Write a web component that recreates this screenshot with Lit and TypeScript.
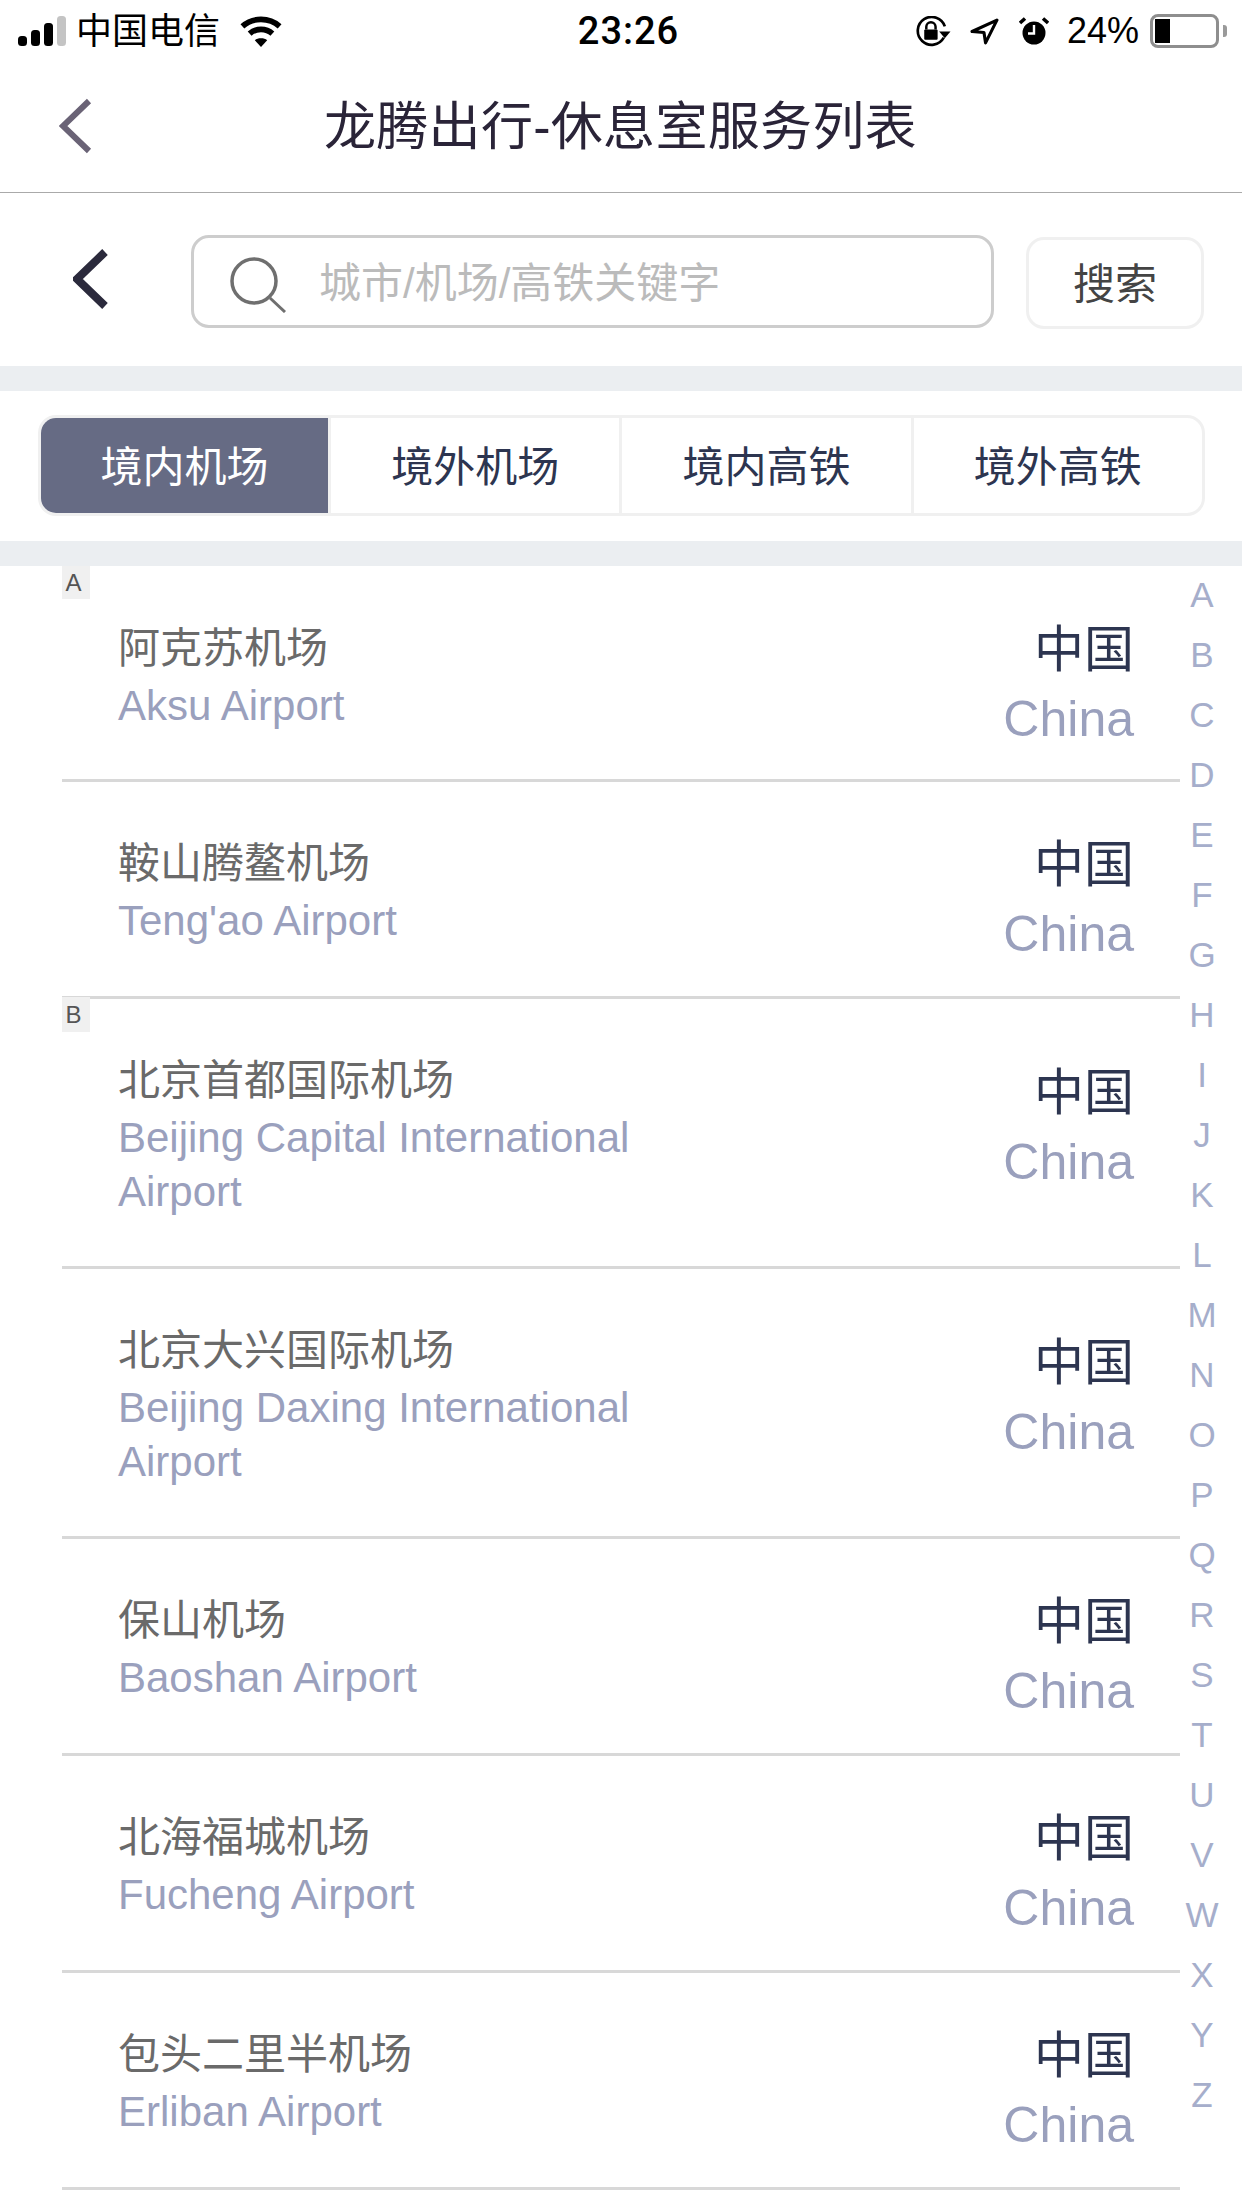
import { LitElement, html, css, svg } from 'lit';
import { customElement } from 'lit/decorators.js';

interface Airport {
  name: string;
  en: string;
  letter?: string;
  two?: boolean;
}

const AIRPORTS: Airport[] = [
  { name: '阿克苏机场', en: 'Aksu Airport', letter: 'A' },
  { name: '鞍山腾鳌机场', en: "Teng'ao Airport" },
  { name: '北京首都国际机场', en: 'Beijing Capital International Airport', letter: 'B', two: true },
  { name: '北京大兴国际机场', en: 'Beijing Daxing International Airport', two: true },
  { name: '保山机场', en: 'Baoshan Airport' },
  { name: '北海福城机场', en: 'Fucheng Airport' },
  { name: '包头二里半机场', en: 'Erliban Airport' }
];

const LETTERS = 'ABCDEFGHIJKLMNOPQRSTUVWXYZ'.split('');
const TABS = ['境内机场', '境外机场', '境内高铁', '境外高铁'];

const chevron = (w: number, h: number, cls: string) => svg`
  <svg class=${cls} width=${w} height=${h} viewBox="0 0 ${w} ${h}" fill="none">
    <path d="M${w - 4} 4 L4 ${h / 2} L${w - 4} ${h - 4}" stroke="currentColor"/>
  </svg>`;

@customElement('app-root')
export class AppRoot extends LitElement {
  static styles = css`
    :host {
      display: block;
      position: relative;
      width: 1242px;
      height: 2208px;
      overflow: hidden;
      background: #fff;
      font-family: "Liberation Sans", "Noto Sans CJK SC", sans-serif;
    }
    svg {
      display: block;
    }
    .status {
      height: 62px;
      display: grid;
      grid-template-columns: 1fr auto 1fr;
      align-items: center;
      padding: 0 15px 0 18px;
      color: #000;
      font-size: 36px;
    }
    .status-left, .status-right {
      display: flex;
      align-items: center;
    }
    .status-right {
      justify-content: flex-end;
    }
    .carrier {
      margin: 2px 19px 0 10px;
      line-height: 40px;
    }
    .time {
      font-family: Roboto, sans-serif;
      font-weight: 500;
      font-size: 38px;
      letter-spacing: 1px;
      margin-left: 12px;
    }
    .pct {
      margin: 0 11px 0 18px;
    }
    .ic-loc {
      margin: 0 20px 0 19px;
    }
    .battery {
      display: flex;
      align-items: center;
      gap: 4px;
    }
    .cell {
      width: 69px;
      height: 34px;
      box-sizing: border-box;
      border: 3px solid #8e8e8e;
      border-radius: 8px;
      padding: 2px;
    }
    .cell div {
      width: 15px;
      height: 100%;
      background: #000;
    }
    .nub {
      width: 4px;
      height: 12px;
      background: #9a9a9a;
      border-radius: 0 3px 3px 0;
    }
    .nav {
      height: 130px;
      display: flex;
      align-items: center;
      border-bottom: 1px solid #aaa;
    }
    .nav-back {
      margin-left: 59px;
      margin-top: -2px;
      color: #6a6376;
      stroke-width: 6px;
    }
    .title {
      margin-left: 231px;
      font-size: 52px;
      letter-spacing: 0.3px;
      color: #2a2438;
      line-height: 70px;
    }
    .search {
      height: 198px;
      box-sizing: border-box;
      display: flex;
      align-items: flex-start;
      padding-top: 42px;
      border-bottom: 25px solid #ebeef1;
    }
    .search-back {
      margin: 13px 0 0 73px;
      color: #2b2a3c;
      stroke-width: 8px;
    }
    .box {
      margin-left: 82px;
      width: 803px;
      height: 93px;
      box-sizing: border-box;
      border: 3px solid #cdcdcd;
      border-radius: 18px;
      display: flex;
      align-items: center;
      padding: 0 0 5px 36px;
      color: #bbb;
      font-size: 42px;
    }
    .box svg {
      margin: 11px 33px 0 0;
    }
    .btn {
      margin-left: 32px;
      margin-top: 2px;
      width: 178px;
      height: 92px;
      box-sizing: border-box;
      border: 3px solid #f0f0f0;
      border-radius: 18px;
      display: flex;
      align-items: center;
      justify-content: center;
      padding-bottom: 6px;
      color: #444;
      font-size: 42px;
    }
    .tabs-wrap {
      padding: 24px 37px 25px 38px;
      border-bottom: 25px solid #ebeef1;
    }
    .tabs {
      height: 101px;
      box-sizing: border-box;
      border: 3px solid #f0f0f0;
      border-radius: 18px;
      display: grid;
      grid-template-columns: 287px 1fr 1fr 1fr;
      overflow: hidden;
    }
    .tab {
      display: flex;
      align-items: center;
      justify-content: center;
      padding-bottom: 5px;
      font-size: 42px;
      color: #2d3550;
      border-left: 3px solid #f0f0f0;
    }
    .tab:first-child {
      border-left: 0;
    }
    .tab.on {
      background: #666b84;
      color: #fff;
    }
    .list {
      margin: 0 62px;
    }
    .row {
      position: relative;
      height: 217px;
      box-sizing: border-box;
      border-bottom: 3px solid #d8d8d8;
      padding: 52px 46px 0 56px;
      display: flex;
      justify-content: space-between;
      align-items: flex-start;
    }
    .row.two {
      height: 270px;
    }
    .row.first {
      height: 216px;
      padding-top: 53px;
    }
    .badge {
      position: absolute;
      left: 0;
      top: -2px;
      width: 28px;
      height: 35px;
      box-sizing: border-box;
      padding-right: 5px;
      background: #f0f0f0;
      color: #555;
      font-size: 24px;
      line-height: 35px;
      text-align: center;
    }
    .row.first .badge {
      top: 0;
      height: 33px;
      line-height: 33px;
    }
    .name {
      font-size: 42px;
      line-height: 60px;
      color: #6a6a6a;
    }
    .en {
      width: 560px;
      font-size: 42px;
      line-height: 54px;
      color: #9aa0bd;
    }
    .where {
      margin-top: -6px;
      text-align: right;
    }
    .row.two .where {
      margin-top: 5px;
    }
    .cn {
      font-size: 50px;
      line-height: 74px;
      color: #2d3550;
    }
    .country {
      font-size: 50px;
      line-height: 64px;
      color: #9aa0bd;
    }
    .index {
      position: absolute;
      top: 565px;
      left: 1180px;
      width: 44px;
      display: grid;
      grid-auto-rows: 60px;
      font-size: 35px;
      color: #a6aecb;
      text-align: center;
      line-height: 60px;
    }
  `;

  private _statusLeft() {
    return html`
      <div class="status-left">
        <svg width="48" height="30" viewBox="0 0 48 30">
          <rect x="0" y="20" width="9" height="10" rx="3.5" fill="#000"/>
          <rect x="13" y="14" width="9" height="16" rx="3.5" fill="#000"/>
          <rect x="26" y="7" width="9" height="23" rx="3.5" fill="#000"/>
          <rect x="39" y="0" width="9" height="30" rx="3.5" fill="#c4c4c4"/>
        </svg>
        <span class="carrier">中国电信</span>
        <svg width="44" height="31" viewBox="0 0 42 30" fill="none">
          <path d="M3 10 C13 1 29 1 39 10" stroke="#000" stroke-width="5.5"/>
          <path d="M10 17 C16 11.5 26 11.5 32 17" stroke="#000" stroke-width="5.5"/>
          <path d="M15 23.5 C18 21 24 21 27 23.5 L21 30Z" fill="#000"/>
        </svg>
      </div>`;
  }

  private _statusRight() {
    return html`
      <div class="status-right">
        <svg width="35" height="31" viewBox="0 0 34 30" fill="none">
          <path d="M27 21 A13.5 13.5 0 1 1 28 10" stroke="#000" stroke-width="2.6"/>
          <path d="M22.500 15 L33.500 15 L28 21.500Z" fill="#000"/>
          <path d="M10 13 V10.500 A4.500 4.500 0 0 1 19 10.500 V13" stroke="#000" stroke-width="2.400"/>
          <rect x="8" y="13" width="13" height="10" rx="1" fill="#000"/>
        </svg>
        <svg class="ic-loc" width="29" height="27" viewBox="0 0 28 26" fill="none">
          <path d="M26 2 L2 13 L13.500 14 L15 24Z" stroke="#000" stroke-width="3" stroke-linejoin="round"/>
        </svg>
        <svg width="30" height="28" viewBox="0 0 30 28" fill="none">
          <circle cx="15" cy="16" r="11.500" fill="#000"/>
          <path d="M15 8 V16.500 H9" stroke="#fff" stroke-width="2.400"/>
          <path d="M1 6 L6 1.500 M29 6 L24 1.500" stroke="#000" stroke-width="3.500"/>
        </svg>
        <span class="pct">24%</span>
        <div class="battery">
          <div class="cell"><div></div></div>
          <div class="nub"></div>
        </div>
      </div>`;
  }

  render() {
    return html`
      <div class="status">
        ${this._statusLeft()}
        <div class="time">23:26</div>
        ${this._statusRight()}
      </div>
      <div class="nav">
        ${chevron(34, 58, 'nav-back')}
        <div class="title">龙腾出行-休息室服务列表</div>
      </div>
      <div class="search">
        ${chevron(36, 62, 'search-back')}
        <div class="box">
          <svg width="56" height="56" viewBox="0 0 56 56" fill="none">
            <circle cx="24" cy="24" r="22" stroke="#6f6f6f" stroke-width="3.5"/>
            <path d="M40 41 L55 55" stroke="#6f6f6f" stroke-width="3"/>
          </svg>
          城市/机场/高铁关键字
        </div>
        <div class="btn">搜索</div>
      </div>
      <div class="tabs-wrap">
        <div class="tabs">
          ${TABS.map((t, i) => html`<div class="tab ${i === 0 ? 'on' : ''}">${t}</div>`)}
        </div>
      </div>
      <div class="list">
        ${AIRPORTS.map((a, i) => html`
          <div class="row ${a.two ? 'two' : ''} ${i === 0 ? 'first' : ''}">
            ${a.letter ? html`<div class="badge">${a.letter}</div>` : ''}
            <div>
              <div class="name">${a.name}</div>
              <div class="en">${a.en}</div>
            </div>
            <div class="where">
              <div class="cn">中国</div>
              <div class="country">China</div>
            </div>
          </div>
        `)}
      </div>
      <div class="index">
        ${LETTERS.map(l => html`<div>${l}</div>`)}
      </div>
    `;
  }
}
